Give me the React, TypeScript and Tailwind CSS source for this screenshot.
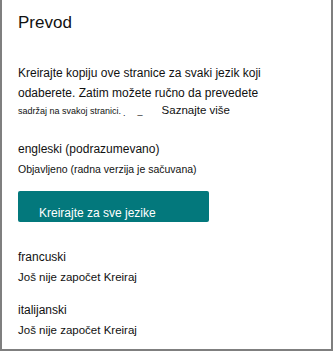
export default function App() {
  return (
    <div
      className="w-[333px] h-[351px] bg-white border-l-2 border-r-2 border-b-2 border-[#7f7f7f] pl-4 text-[#111111]"
      style={{ fontFamily: '"Liberation Sans", Arial, sans-serif' }}
    >
      <h1 className="pt-[11px] text-[17px] leading-[24px]">Prevod</h1>

      <div className="mt-[28px] text-[12px] leading-[20px]">
        <p>Kreirajte kopiju ove stranice za svaki jezik koji</p>
        <p>odaberete. Zatim možete ručno da prevedete</p>
        <div className="flex items-baseline leading-[14px]">
          <span className="text-[9px]">sadržaj na svakoj stranici.</span>
          <span className="ml-[2px] text-[9px] translate-y-[2px]">.</span>
          <span className="ml-[12px] text-[9px]">_</span>
          <span className="ml-[19px] text-[11.5px]">Saznajte više</span>
        </div>
      </div>

      <div className="mt-[21px]">
        <p className="text-[12px] leading-[20px]">engleski (podrazumevano)</p>
        <p className="text-[10.5px] leading-[21px]">Objavljeno (radna verzija je sačuvana)</p>
      </div>

      <button className="mt-[11px] block w-[191px] h-[31px] rounded-[2px] bg-[#03787c] pl-[21px] pt-[12px] text-left align-top text-[12px] leading-[14px] text-white">
        <span className="block">Kreirajte za sve jezike</span>
      </button>

      <div className="mt-[25px]">
        <p className="text-[12px] leading-[20px]">francuski</p>
        <p className="text-[11.5px] leading-[20px]">Još nije započet Kreiraj</p>
      </div>

      <div className="mt-[13px]">
        <p className="text-[12px] leading-[20px]">italijanski</p>
        <p className="text-[11.5px] leading-[20px]">Još nije započet Kreiraj</p>
      </div>
    </div>
  )
}
